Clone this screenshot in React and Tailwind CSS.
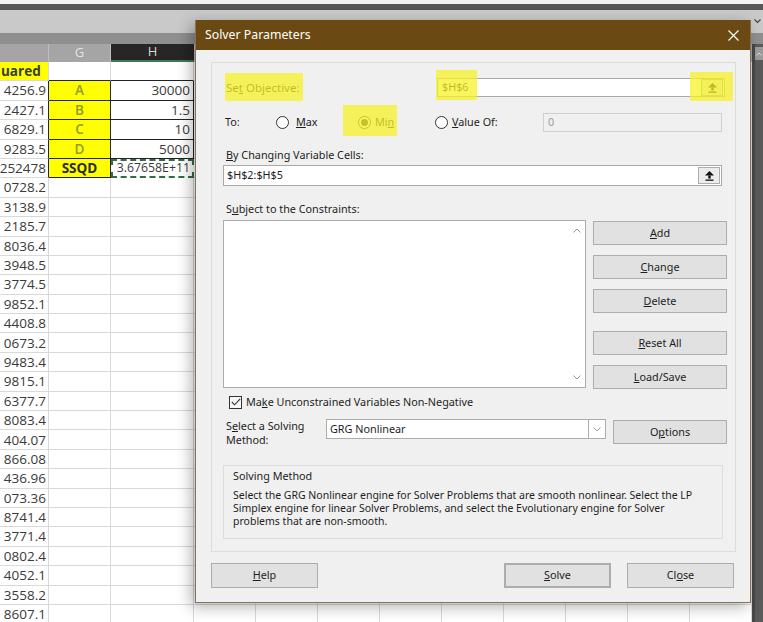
import React from 'react';

// Column F values (only the tail of each number is on screen)
const fColumn = [
  'uared', '4256.9', '2427.1', '6829.1', '9283.5', '252478', '0728.2', '3138.9',
  '2185.7', '8036.4', '3948.5', '3774.5', '9852.1', '4408.8', '0673.2', '9483.4',
  '9815.1', '6377.7', '8083.4', '404.07', '866.08', '436.96', '073.36', '8741.4',
  '3771.4', '0802.4', '4052.1', '3558.2', '8607.1',
];

const params = {
  1: ['A', '30000'],
  2: ['B', '1.5'],
  3: ['C', '10'],
  4: ['D', '5000'],
  5: ['SSQD', '3.67658E+11'],
};

const restCols = Array.from({ length: 9 });

function Sheet() {
  return (
    <div className="w-[752px] flex flex-col font-['Open_Sans',sans-serif] text-[13.5px] text-[#3a3a3a]">
      <div className="flex h-[18px] bg-[#a5a5a5] text-[#e4e4e4] text-[13px]">
        <div className="w-[49px] border-r border-[#bdbdbd]" />
        <div className="w-[62px] border-r border-[#bdbdbd] flex items-center justify-center">G</div>
        <div className="w-[83px] bg-[#262626] border-b-2 border-[#3d7a52] flex items-center justify-center text-[#d8d8d8]">H</div>
        {restCols.map((_, i) => (
          <div key={i} className="w-[62px] border-l border-[#bdbdbd]" />
        ))}
      </div>
      {fColumn.map((v, i) => {
        const p = params[i];
        const first = i === 0;
        return (
          <div key={i} className="flex h-[19.4px]">
            <div
              className={`w-[49px] flex items-center border-b border-r ${p ? 'border-r-[#222]' : 'border-r-[#d9d9d9]'} border-b-[#d9d9d9] ${
                first ? 'bg-[#ffff00] font-bold justify-start pl-[1px]' : 'justify-end pr-[2px]'
              }`}
            >
              {v}
            </div>
            {p ? (
              <>
                <div
                  className={`w-[62px] flex items-center justify-center bg-[#ffff00] border-b border-r border-[#222] ${
                    p[0] === 'SSQD' ? 'font-bold text-[#2a2a2a]' : 'text-[#8d9b36] font-semibold'
                  }`}
                >
                  {p[0]}
                </div>
                {p[0] === 'SSQD' ? (
                  <div className="w-[83px] flex items-center justify-end pr-[2px] bg-white border-2 border-dashed border-[#2f6e45] text-[12.3px] whitespace-nowrap overflow-hidden">
                    {p[1]}
                  </div>
                ) : (
                  <div className="w-[83px] flex items-center justify-end pr-[3px] border-b border-r border-[#222]">{p[1]}</div>
                )}
              </>
            ) : (
              <>
                <div className={`w-[62px] border-r border-r-[#d9d9d9] border-b ${first ? 'border-b-[#222]' : 'border-b-[#d9d9d9]'}`} />
                <div className={`w-[83px] border-r border-r-[#d9d9d9] border-b ${first ? 'border-b-[#222]' : 'border-b-[#d9d9d9]'}`} />
              </>
            )}
            {restCols.map((_, j) => (
              <div key={j} className="w-[62px] border-r border-b border-[#d9d9d9]" />
            ))}
          </div>
        );
      })}
    </div>
  );
}

function RefIcon() {
  return (
    <svg width="9" height="10" viewBox="0 0 9 10">
      <polygon points="4.5,0 0,4.5 9,4.5" fill="#111" />
      <rect x="3.3" y="4.5" width="2.4" height="3" fill="#111" />
      <rect x="0.5" y="8.5" width="8" height="1.3" fill="#111" />
    </svg>
  );
}

function RefButton() {
  return (
    <div className="w-[22px] h-[17px] mr-[1px] border border-[#adadad] bg-[#ececec] flex items-center justify-center">
      <RefIcon />
    </div>
  );
}

function Radio({ checked }) {
  return (
    <span className="w-[13px] h-[13px] rounded-full border border-[#333] bg-white flex items-center justify-center">
      {checked && <span className="w-[7px] h-[7px] rounded-full bg-[#333]" />}
    </span>
  );
}

function Btn({ children, className = '' }) {
  return (
    <div className={`h-[24px] bg-[#e1e1e1] border border-[#adadad] flex items-center justify-center ${className}`}>
      {children}
    </div>
  );
}

function Chevron({ up }) {
  return (
    <svg width="8" height="5" viewBox="0 0 8 5">
      <path d={up ? 'M0.5 4.5 L4 1 L7.5 4.5' : 'M0.5 0.5 L4 4 L7.5 0.5'} fill="none" stroke="#9a9a9a" strokeWidth="1" />
    </svg>
  );
}

function SolverDialog() {
  return (
    <div className="absolute left-[195px] top-[20px] w-[556px] h-[583px] flex flex-col bg-[#f0f0f0] border-x border-b border-[#857358] shadow-[-4px_4px_14px_rgba(0,0,0,0.3)] font-['Noto_Sans',sans-serif] text-[10.8px] text-[#1e1e1e]">
      <div className="h-[30px] shrink-0 bg-[#6a4913] flex items-center justify-between pl-[9px] pr-[11px] text-white text-[12.3px]">
        <span>Solver Parameters</span>
        <svg width="11" height="11" viewBox="0 0 11 11">
          <path d="M0.5 0.5 L10.5 10.5 M10.5 0.5 L0.5 10.5" stroke="#fff" strokeWidth="1.2" />
        </svg>
      </div>

      <div className="mt-[12px] ml-[15px] w-[525px] h-[490px] border border-[#dcdcdc] pl-[11px] pt-[15px]">
        {/* objective */}
        <div className="flex h-[19px] items-center">
          <div className="w-[214px] pl-[3px] text-[11.5px]">
            Se<u>t</u> Objective:
          </div>
          <div className="w-[288px] h-[19px] bg-white border border-[#a9a9a9] flex items-center justify-between pl-[4px]">
            <span>$H$6</span>
            <RefButton />
          </div>
        </div>

        {/* to: max / min / value of */}
        <div className="flex h-[19px] items-center mt-[16px]">
          <div className="w-[53px] pl-[2px]">To:</div>
          <div className="w-[82px] flex items-center gap-[7px]">
            <Radio />
            <span>
              <u>M</u>ax
            </span>
          </div>
          <div className="w-[77px] flex items-center gap-[4px]">
            <Radio checked />
            <span>
              Mi<u>n</u>
            </span>
          </div>
          <div className="w-[108px] flex items-center gap-[4px]">
            <Radio />
            <span>
              <u>V</u>alue Of:
            </span>
          </div>
          <div className="w-[179px] h-[19px] bg-[#f0f0f0] border border-[#cfcfcf] flex items-center pl-[4px] text-[#9a9a9a]">0</div>
        </div>

        <div className="mt-[15px] h-[16px] flex items-center pl-[3px]">
          <span>
            <u>B</u>y Changing Variable Cells:
          </span>
        </div>
        <div className="mt-[2px] w-[499px] h-[21px] bg-white border border-[#a9a9a9] flex items-center justify-between pl-[3px]">
          <span>$H$2:$H$5</span>
          <RefButton />
        </div>

        <div className="mt-[15px] h-[16px] flex items-center pl-[3px]">
          <span>
            S<u>u</u>bject to the Constraints:
          </span>
        </div>

        {/* constraints list + buttons */}
        <div className="mt-[3px] flex">
          <div className="w-[363px] h-[168px] bg-white border border-[#acacac] flex justify-end">
            <div className="w-[17px] flex flex-col items-center justify-between py-[7px]">
              <Chevron up />
              <Chevron />
            </div>
          </div>
          <div className="ml-[7px] w-[134px] pt-[1px] flex flex-col">
            <Btn>
              <u>A</u>dd
            </Btn>
            <Btn className="mt-[10px]">
              <u>C</u>hange
            </Btn>
            <Btn className="mt-[10px]">
              <u>D</u>elete
            </Btn>
            <Btn className="mt-[18px]">
              <u>R</u>eset All
            </Btn>
            <Btn className="mt-[10px]">
              <u>L</u>oad/Save
            </Btn>
          </div>
        </div>

        <div className="mt-[5px] h-[16px] flex items-center pl-[6px] gap-[4px]">
          <span className="w-[13px] h-[13px] border border-[#333] bg-[#f6f6f6] flex items-center justify-center">
            <svg width="10" height="8" viewBox="0 0 10 8">
              <path d="M0.8 4 L3.6 6.8 L9.2 0.8" fill="none" stroke="#333" strokeWidth="1.1" />
            </svg>
          </span>
          <span>
            Ma<u>k</u>e Unconstrained Variables Non-Negative
          </span>
        </div>

        {/* solving method select */}
        <div className="mt-[9px] flex h-[25px]">
          <div className="w-[103px] pl-[3px] leading-[14px]">
            S<u>e</u>lect a Solving
            <br />
            Method:
          </div>
          <div className="w-[280px] h-[20px] bg-white border border-[#acacac] flex items-center justify-between pl-[3px]">
            <span>GRG Nonlinear</span>
            <div className="w-[17px] h-[18px] border-l border-[#acacac] flex items-center justify-center">
              <Chevron />
            </div>
          </div>
          <Btn className="ml-[7px] w-[114px] mt-[1px]">
            O<u>p</u>tions
          </Btn>
        </div>

        <div className="mt-[21px] w-[500px] h-[74px] border border-[#dcdcdc] pl-[9px] pt-[3px]">
          <div className="leading-[14px]">Solving Method</div>
          <div className="mt-[6px] leading-[13px] text-[10.5px] whitespace-nowrap">
            Select the GRG Nonlinear engine for Solver Problems that are smooth nonlinear. Select the LP
            <br />
            Simplex engine for linear Solver Problems, and select the Evolutionary engine for Solver
            <br />
            problems that are non-smooth.
          </div>
        </div>
      </div>

      {/* footer buttons */}
      <div className="mt-[11px] ml-[15px] flex">
        <Btn className="w-[107px] h-[25px]">
          <u>H</u>elp
        </Btn>
        <Btn className="ml-[186px] w-[107px] h-[25px] border-2 border-[#4a7fab]">
          <u>S</u>olve
        </Btn>
        <Btn className="ml-[16px] w-[107px] h-[25px]">
          Cl<u>o</u>se
        </Btn>
      </div>
    </div>
  );
}

export default function App() {
  return (
    <div className="relative w-[763px] h-[622px] overflow-hidden bg-white">
      <div className="h-[4px] bg-[#f2f2f2]" />
      <div className="h-[6px] bg-[#575757]" />
      <div className="h-[23px] bg-[#c9c9c9] flex justify-end pr-[2px] items-center">
        <svg width="7" height="5" viewBox="0 0 7 5">
          <path d="M0.5 0.5 L3.5 3.5 L6.5 0.5" fill="none" stroke="#444" strokeWidth="1.2" />
        </svg>
      </div>
      <div className="h-[11px] bg-[#8f8f8f]" />
      <div className="flex">
        <Sheet />
        <div className="w-[11px] bg-[#474747] flex">
          <div className="ml-[3px] flex-1 bg-[#5a5a5a] flex flex-col">
            <div className="mt-[3px] h-[13px] bg-[#9c9c9c] flex items-center justify-center">
              <svg width="6" height="4" viewBox="0 0 6 4">
                <path d="M0.5 3.5 L3 1 L5.5 3.5" fill="none" stroke="#e0e0e0" strokeWidth="1" />
              </svg>
            </div>
          </div>
        </div>
      </div>

      <SolverDialog />

      {/* highlighter marks drawn over the dialog */}
      <div className="absolute left-[225px] top-[73px] w-[78px] h-[28px] bg-[rgba(246,242,40,0.75)]" />
      <div className="absolute left-[436px] top-[70px] w-[41px] h-[30px] bg-[rgba(246,242,40,0.75)]" />
      <div className="absolute left-[690px] top-[72px] w-[43px] h-[29px] bg-[rgba(246,242,40,0.75)]" />
      <div className="absolute left-[343px] top-[105px] w-[54px] h-[31px] bg-[rgba(246,242,40,0.75)]" />
    </div>
  );
}
